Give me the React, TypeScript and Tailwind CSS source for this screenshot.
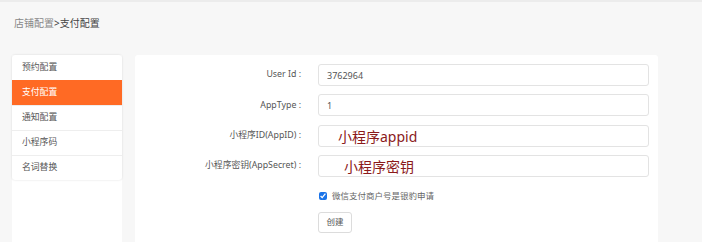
import { useState } from "react";

const MENU = ["预约配置", "支付配置", "通知配置", "小程序码", "名词替换"];

const FIELDS = [
  { label: "User Id :", value: "3762964" },
  { label: "AppType :", value: "1" },
  { label: "小程序ID(AppID) :", value: "", note: "小程序appid", noteClass: "left-[20px] top-[2px]" },
  { label: "小程序密钥(AppSecret) :", value: "", note: "小程序密钥", noteClass: "left-[26px] top-[2px]" },
];

export default function App() {
  const [active, setActive] = useState(1);
  const [bankApply, setBankApply] = useState(true);

  return (
    <main
      className="w-[702px] h-[242px] overflow-hidden bg-[#f7f7f7] border-t-2 border-[#ececec] flex flex-col"
      style={{ fontFamily: '"Noto Sans", "Noto Sans CJK SC", sans-serif' }}
    >
      {/* 面包屑 */}
      <div className="shrink-0 h-[40px] pl-[14px] pt-[13px] text-[10px] leading-[16px]">
        <span className="text-[#888]">店铺配置</span>
        <span className="text-[#444]">&gt;支付配置</span>
      </div>

      <div className="flex-1 min-h-0 flex gap-[13px] pl-[12px] pt-[13px]">
        {/* 左侧菜单 */}
        <div className="w-[110px] bg-white">
          <div className="rounded-[3px] shadow-[0_0_2px_rgba(0,0,0,0.15)] overflow-hidden">
            {MENU.map((m, i) => (
              <div
                key={m}
                onClick={() => setActive(i)}
                className={`h-[25px] pl-[10px] flex items-center text-[8.8px] cursor-pointer ${
                  i === active ? "bg-[#ff6a24] text-white" : "text-[#555] border-t border-[#eeeeee] first:border-t-0"
                }`}
              >
                {m}
              </div>
            ))}
          </div>
        </div>

        {/* 表单 */}
        <div className="w-[523px] bg-white rounded-t-[3px] pt-[9px] pr-[9px] flex flex-col">
          <div className="flex flex-col gap-[8.3px]">
            {FIELDS.map((f) => (
              <div key={f.label} className="flex items-center">
                <label className="w-[166px] text-right text-[8.8px] text-[#555]">{f.label}</label>
                <div className="relative ml-[17px] flex-1">
                  <input
                    defaultValue={f.value}
                    className="block w-full h-[22px] border border-[#e3e3e3] rounded-[3px] px-[8px] text-[9px] text-[#555] outline-none"
                  />
                  {f.note && (
                    <span
                      className={`absolute ${f.noteClass} text-[14px] leading-[20px] text-[#8b1a1a] pointer-events-none`}
                    >
                      {f.note}
                    </span>
                  )}
                </div>
              </div>
            ))}
          </div>

          <label className="ml-[184px] mt-[13px] flex items-center gap-[5px] text-[8.5px] text-[#666]">
            <input
              type="checkbox"
              checked={bankApply}
              onChange={(e) => setBankApply(e.target.checked)}
              className="w-[8px] h-[8px] m-0 accent-[#1a73e8]"
            />
            微信支付商户号是银豹申请
          </label>

          <button className="ml-[183px] mt-[9px] w-[34px] h-[21px] border border-[#dcdcdc] rounded-[3px] bg-white text-[8.5px] text-[#555]">
            创建
          </button>
        </div>
      </div>
    </main>
  );
}
